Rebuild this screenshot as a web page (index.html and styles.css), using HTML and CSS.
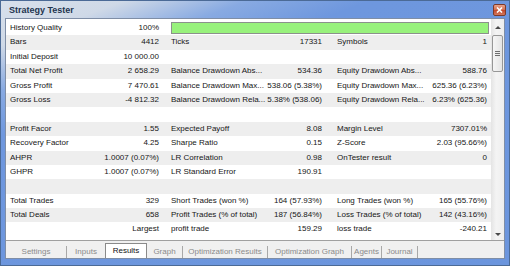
FILE: index.html
```html
<!DOCTYPE html>
<html lang="en">
<head>
	<meta charset="UTF-8">
	<meta name="viewport" content="width=device-width, initial-scale=1.0">
	<title>Strategy Tester</title>
	<link rel="stylesheet" href="styles.css">
</head>

<body>
	<div class="window">
		<header class="titlebar">
			<h1>Strategy Tester</h1>
			<button class="close" type="button" title="Close">
				<svg width="7" height="6" viewBox="0 0 7 6"><path d="M1 0.5 L6 5.5 M6 0.5 L1 5.5" stroke="#fff" stroke-width="1.6" fill="none"/></svg>
			</button>
		</header>
		<div class="client">
			<div class="panel">
				<div class="report">
					<div class="row">
						<div class="cell c1"><span>History Quality</span><span>100%</span></div>
						<div class="cell quality"><div class="bar"></div></div>
					</div>
					<div class="row">
						<div class="cell c1"><span>Bars</span><span>4412</span></div>
						<div class="cell c2"><span>Ticks</span><span>17331</span></div>
						<div class="cell c3"><span>Symbols</span><span>1</span></div>
					</div>
					<div class="row">
						<div class="cell c1"><span>Initial Deposit</span><span>10 000.00</span></div>
						<div class="cell c2"></div>
						<div class="cell c3"></div>
					</div>
					<div class="row">
						<div class="cell c1"><span>Total Net Profit</span><span>2 658.29</span></div>
						<div class="cell c2"><span>Balance Drawdown Abs...</span><span>534.36</span></div>
						<div class="cell c3"><span>Equity Drawdown Abs...</span><span>588.76</span></div>
					</div>
					<div class="row">
						<div class="cell c1"><span>Gross Profit</span><span>7 470.61</span></div>
						<div class="cell c2"><span>Balance Drawdown Max...</span><span>538.06 (5.38%)</span></div>
						<div class="cell c3"><span>Equity Drawdown Max...</span><span>625.36 (6.23%)</span></div>
					</div>
					<div class="row">
						<div class="cell c1"><span>Gross Loss</span><span>-4 812.32</span></div>
						<div class="cell c2"><span>Balance Drawdown Rela...</span><span>5.38% (538.06)</span></div>
						<div class="cell c3"><span>Equity Drawdown Rela...</span><span>6.23% (625.36)</span></div>
					</div>
					<div class="row"></div>
					<div class="row">
						<div class="cell c1"><span>Profit Facor</span><span>1.55</span></div>
						<div class="cell c2"><span>Expected Payoff</span><span>8.08</span></div>
						<div class="cell c3"><span>Margin Level</span><span>7307.01%</span></div>
					</div>
					<div class="row">
						<div class="cell c1"><span>Recovery Factor</span><span>4.25</span></div>
						<div class="cell c2"><span>Sharpe Ratio</span><span>0.15</span></div>
						<div class="cell c3"><span>Z-Score</span><span>2.03 (95.66%)</span></div>
					</div>
					<div class="row">
						<div class="cell c1"><span>AHPR</span><span>1.0007 (0.07%)</span></div>
						<div class="cell c2"><span>LR Correlation</span><span>0.98</span></div>
						<div class="cell c3"><span>OnTester result</span><span>0</span></div>
					</div>
					<div class="row">
						<div class="cell c1"><span>GHPR</span><span>1.0007 (0.07%)</span></div>
						<div class="cell c2"><span>LR Standard Error</span><span>190.91</span></div>
						<div class="cell c3"></div>
					</div>
					<div class="row"></div>
					<div class="row">
						<div class="cell c1"><span>Total Trades</span><span>329</span></div>
						<div class="cell c2"><span>Short Trades (won %)</span><span>164 (57.93%)</span></div>
						<div class="cell c3"><span>Long Trades (won %)</span><span>165 (55.76%)</span></div>
					</div>
					<div class="row">
						<div class="cell c1"><span>Total Deals</span><span>658</span></div>
						<div class="cell c2"><span>Profit Trades (% of total)</span><span>187 (56.84%)</span></div>
						<div class="cell c3"><span>Loss Trades (% of total)</span><span>142 (43.16%)</span></div>
					</div>
					<div class="row">
						<div class="cell c1"><span></span><span>Largest</span></div>
						<div class="cell c2"><span>profit trade</span><span>159.29</span></div>
						<div class="cell c3"><span>loss trade</span><span>-240.21</span></div>
					</div>
				</div>
				<div class="scrollbar">
					<span class="arrow"><i class="up"></i></span>
					<span class="thumb"><i></i></span>
					<span class="track"></span>
					<span class="arrow bottom"><i class="down"></i></span>
				</div>
			</div>
			<ul class="tabs">
				<li class="tab-settings">Settings</li>
				<li class="tab-inputs">Inputs</li>
				<li class="tab-results active">Results</li>
				<li class="tab-graph">Graph</li>
				<li class="tab-optres">Optimization Results</li>
				<li class="tab-optgraph">Optimization Graph</li>
				<li class="tab-agents">Agents</li>
				<li class="tab-journal">Journal</li>
			</ul>
		</div>
	</div>
</body>

</html>
```

FILE: styles.css
```css
body {
	margin: 0;
	font-family: "Liberation Sans", Arial, sans-serif;
	font-size: 8px;
	color: #161616;
	background: #fff;
}

.window {
	width: 510px;
	height: 266px;
	box-sizing: border-box;
	display: flex;
	flex-direction: column;
	padding: 0 4px 6px 4px;
	border: 1px solid #4b6a96;
	background: linear-gradient(160deg, #d8e0eb 0%, #cfd9e7 10%, #88aae2 20%, #6e97de 30%, #6b95dd 100%);
}

/* title bar */
.titlebar {height: 17px; display: flex; align-items: center; justify-content: space-between; padding: 0 0 0 4px;}
.titlebar h1 {margin: 0; font-size: 9px; font-weight: bold; color: #23344f;}
.close {
	width: 13px; height: 12px; margin-right: -1px; padding: 0;
	display: flex; align-items: center; justify-content: center;
	border: 1px solid #7d3a2a; border-radius: 2px;
	background: linear-gradient(#e8a48c, #d06a4c 50%, #c2462a 51%, #d3785c);
}

/* client area */
.client {flex: 1; display: flex; flex-direction: column; border: 1px solid #7f8ea6; background: #f0f0f0;}
.panel {flex: 1; display: flex; background: #fff; border-bottom: 1px solid #a0a0a0;}
.report {flex: 1; padding-top: 2px;}
.row {display: flex; height: 14.4px; line-height: 14.4px;}
.row:nth-child(even) {background: #eeeeee;}
.cell {display: flex; justify-content: space-between; white-space: nowrap; box-sizing: border-box;}
.c1 {width: 159px; padding: 0 6px 0 4px;}
.c2 {width: 165px; padding: 0 8px 0 6px;}
.c3 {flex: 1; padding: 0 4px 0 7px;}
.quality {flex: 1; padding: 1px 2px 1px 6px;}
.quality .bar {flex: 1; box-sizing: border-box; border: 1px solid #8c918c; background: #98f27c;}

/* scrollbar */
.scrollbar {width: 13px; display: flex; flex-direction: column; align-items: center; background: linear-gradient(to right, #e4e4e4, #f4f4f4 40%, #eeeeee);}
.scrollbar .arrow {height: 16px; display: flex; align-items: center; justify-content: center;}
.scrollbar .arrow.bottom {height: 12px;}
.scrollbar .up {border-left: 3px solid transparent; border-right: 3px solid transparent; border-bottom: 3px solid #4a4a4a;}
.scrollbar .down {border-left: 3px solid transparent; border-right: 3px solid transparent; border-top: 3px solid #4a4a4a;}
.scrollbar .thumb {
	width: 11px; height: 37px; box-sizing: border-box;
	display: flex; align-items: center; justify-content: center;
	border: 1px solid #979797; border-radius: 2px;
	background: linear-gradient(to right, #f6f6f6, #e4e4e4);
}
.scrollbar .thumb i {width: 5px; height: 3px; border-top: 1px solid #6f6f6f; border-bottom: 1px solid #6f6f6f; background: linear-gradient(#6f6f6f, #6f6f6f) center / 100% 1px no-repeat;}
.scrollbar .track {flex: 1;}

/* bottom tabs */
.tabs {list-style-type: none; margin: 0; padding: 0; height: 17px; display: flex; align-items: flex-end;}
.tabs li {box-sizing: border-box; height: 12px; line-height: 12px; margin-bottom: 0; text-align: center; color: #8a8a8a; border-right: 1px solid #a8a8a8; white-space: nowrap;}
.tabs li.active {height: 15px; line-height: 14px; color: #111; background: #fff; border: 1px solid #8a8a8a; border-bottom: none;}
.tabs li.tab-inputs {border-right: none;}
.tab-settings {width: 61px;}
.tab-inputs {width: 38px;}
.tab-results {width: 42px;}
.tab-graph {width: 36px;}
.tab-optres {width: 85px;}
.tab-optgraph {width: 84px;}
.tab-agents {width: 30px;}
.tab-journal {width: 36px;}
```
